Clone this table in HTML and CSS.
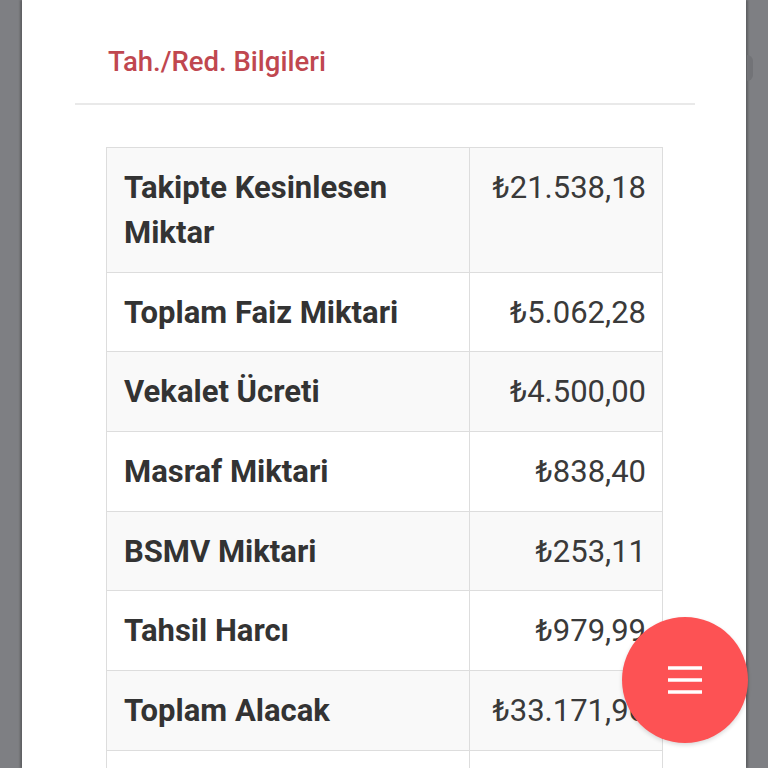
FILE: index.html
```html
<!DOCTYPE html>
<html lang="tr">
<head>
<meta charset="utf-8">
<title>Tah./Red. Bilgileri</title>
<link rel="stylesheet" href="styles.css">
</head>
<body>
<div class="page">
  <div class="card">
    <div class="section">
      <h2 class="title">Tah./Red. Bilgileri</h2>
      <table class="info">
        <tbody>
          <tr><th>Takipte Kesinlesen Miktar</th><td>₺21.538,18</td></tr>
          <tr><th>Toplam Faiz Miktari</th><td>₺5.062,28</td></tr>
          <tr><th>Vekalet Ücreti</th><td>₺4.500,00</td></tr>
          <tr><th>Masraf Miktari</th><td>₺838,40</td></tr>
          <tr><th>BSMV Miktari</th><td>₺253,11</td></tr>
          <tr><th>Tahsil Harcı</th><td>₺979,99</td></tr>
          <tr><th>Toplam Alacak</th><td>₺33.171,96</td></tr>
          <tr class="empty"><th></th><td></td></tr>
        </tbody>
      </table>
    </div>
  </div>
  <div class="edge-tab"></div>
</div>
<button class="fab" aria-label="Menü">
  <svg width="36" height="30" viewBox="0 0 36 30"><path d="M1 3H35M1 15H35M1 27H35" stroke="#fff" stroke-width="3.5" fill="none"/></svg>
</button>
</body>
</html>
```

FILE: styles.css
```css
html, body {
  margin: 0;
  padding: 0;
  background: #7e7f83;
  font-family: Roboto, "Noto Sans", sans-serif;
  overflow: hidden;
}
.page {
  position: relative;
  padding: 0 22px;
  height: 768px;
}
.card {
  background: #fff;
  height: 100%;
  padding: 0 51px 0 53px;
  box-shadow: -2px 0 2px rgba(0,0,0,0.25), 2px 0 2px rgba(0,0,0,0.25);
}
.section {
  padding-top: 46px;
}
.title {
  margin: 0;
  padding: 0 0 25px 33px;
  font-size: 27.5px;
  line-height: 32px;
  font-weight: 500;
  color: #c0474f;
  border-bottom: 2px solid #e9e9e9;
}
.info {
  margin: 42px 32px 0 31px;
  width: calc(100% - 63px);
  border-collapse: collapse;
  color: #333;
  font-size: 31px;
  line-height: 45px;
}
.info th, .info td {
  border: 1px solid #dddddd;
  padding: 17px 17px 16.7px 17px;
  vertical-align: top;
}
.info th {
  text-align: left;
  font-weight: 700;
  width: 328px;
}
.info td {
  text-align: right;
  font-weight: 400;
  padding-right: 16px;
  color: #3a3a3a;
}
.info tr:nth-child(odd) {
  background: #f9f9f9;
}
.info tr.empty th, .info tr.empty td {
  height: 45px;
}
.edge-tab {
  position: absolute;
  right: 15px;
  top: 55px;
  width: 6px;
  height: 26px;
  border-radius: 0 6px 6px 0;
  background: #727377;
}
.fab {
  position: fixed;
  left: 622px;
  top: 617px;
  width: 126px;
  height: 126px;
  border: none;
  border-radius: 50%;
  background: #fd5254;
  display: flex;
  align-items: center;
  justify-content: center;
  padding: 0;
  box-shadow: 0 2px 4px rgba(0,0,0,0.15);
}
```
